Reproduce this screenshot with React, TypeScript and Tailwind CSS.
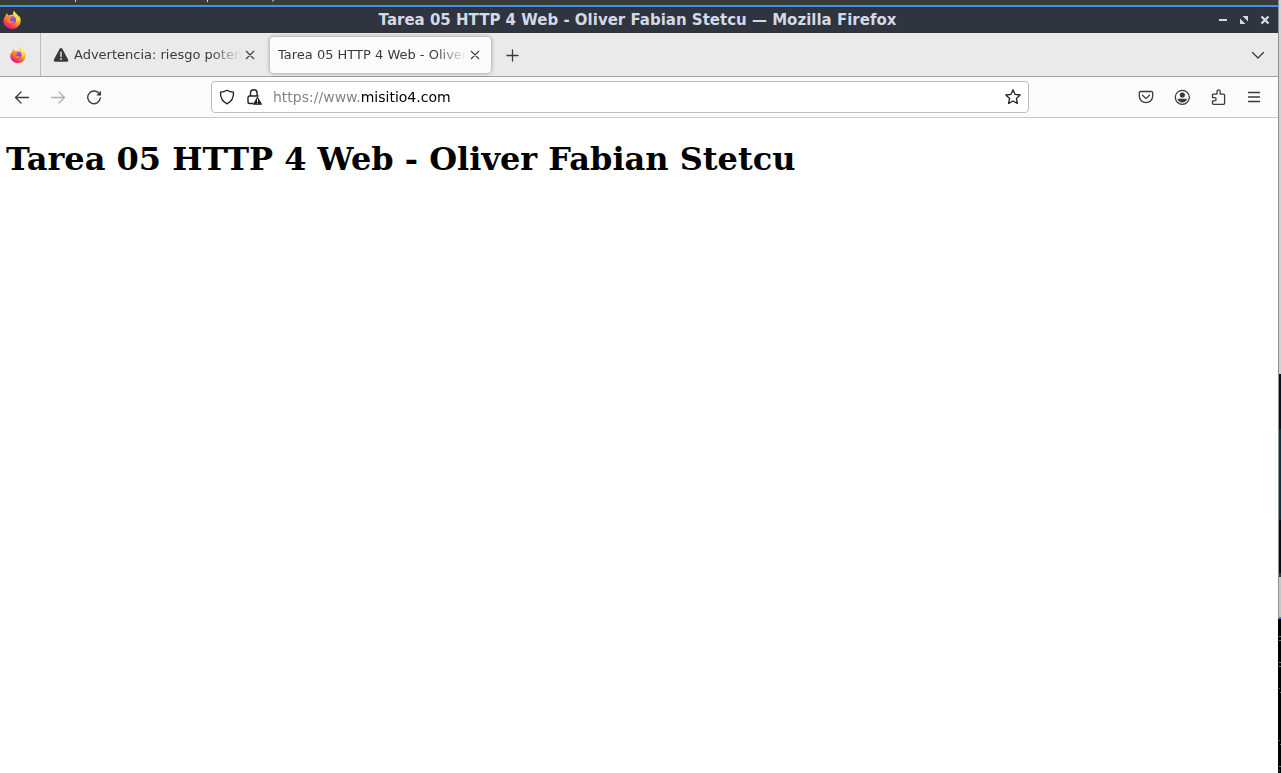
import type { ReactNode } from "react";

const TITLE = "Tarea 05 HTTP 4 Web - Oliver Fabian Stetcu";

function FirefoxLogo({ className, id }: { className: string; id: string }) {
  return (
    <svg viewBox="0 0 32 32" className={`shrink-0 ${className}`} aria-hidden="true">
      <defs>
        <linearGradient id={`${id}-flame`} x1="0.8" y1="0.05" x2="0.25" y2="0.95">
          <stop offset="0.1" stopColor="#fff44f" />
          <stop offset="0.4" stopColor="#ffb22e" />
          <stop offset="0.62" stopColor="#ff7035" />
          <stop offset="0.82" stopColor="#f8365a" />
          <stop offset="1" stopColor="#e31587" />
        </linearGradient>
        <radialGradient id={`${id}-globe`} cx="0.6" cy="0.2" r="0.8">
          <stop offset="0" stopColor="#a052f5" />
          <stop offset="1" stopColor="#5b41d4" />
        </radialGradient>
      </defs>
      <path
        d="M20 0c-2.500 2.500-2.500 5.200-1.500 7.500-3-1-5.800-1-8 .6C8.500 7.500 7.200 5.500 7.300 3.600 5.500 5.300 4.700 7.300 4.700 9 2.300 11.500.5 14.500.5 17.800.5 25.500 7.500 32 16 32s15.500-6.300 15.500-15c0-4-1.600-7.500-4-9.600.5 1.300.7 2.500.6 3.600C26.500 6 21.500 4.500 20 0Z"
        fill={`url(#${id}-flame)`}
      />
      <path d="M20 0c-2.500 3-2 7 1.500 10.500 3 3.500 3.200 7.500 1.500 11 4-2 6-6.500 5.100-10.500C26.500 6 21.500 4.500 20 0Z" fill="#ffe13d" opacity="0.85" />
      <circle cx="16.500" cy="16" r="6.500" fill={`url(#${id}-globe)`} />
      <path d="M5 9.500c3-1.200 6-.4 7.600 1.200 1.700-.3 3 .3 3.600 1.300-.2 1.400-3 1.700-3.600 3-.3 2 1.200 3.600 4 3.300 2-.2 3.300-.6 4.400.2-1.400 3-4.200 4.300-7.300 3.900C9.500 21.800 6.500 18 7 14Z" fill="#ff8a25" opacity="0.9" />
    </svg>
  );
}

function Icon({ children, className = "size-4" }: { children: ReactNode; className?: string }) {
  return (
    <svg
      viewBox="0 0 16 16"
      className={`shrink-0 ${className}`}
      fill="none"
      stroke="currentColor"
      strokeWidth="1.3"
      strokeLinecap="round"
      strokeLinejoin="round"
      aria-hidden="true"
    >
      {children}
    </svg>
  );
}

function IconButton({ label, disabled, children }: { label: string; disabled?: boolean; children: ReactNode }) {
  return (
    <button
      type="button"
      aria-label={label}
      disabled={disabled}
      className="flex size-8 items-center justify-center rounded text-[#3a3a3a] disabled:text-[#b0b0b0]"
    >
      {children}
    </button>
  );
}

function CloseTab() {
  return (
    <button type="button" aria-label="Cerrar pestaña" className="ml-[3px]">
      <Icon className="size-[10px]">
        <path d="m2 2 12 12M14 2 2 14" strokeWidth="1.700" />
      </Icon>
    </button>
  );
}

function TabTitle({ children, className }: { children: ReactNode; className: string }) {
  return (
    <div
      className={`overflow-hidden whitespace-nowrap [mask-image:linear-gradient(to_left,transparent,black_32px)] ${className}`}
    >
      {children}
    </div>
  );
}

function TitleBar() {
  return (
    <div className="flex h-[26px] items-center bg-[#2f343f] pl-[3px] pr-2 text-[#d3dae3]">
      <FirefoxLogo id="window" className="size-[18px]" />
      <div className="min-w-0 flex-1 truncate pl-9 text-center text-[15px] leading-[26px] font-bold">
        {TITLE} — Mozilla Firefox
      </div>
      <div className="flex items-center gap-[11px]">
        <button type="button" aria-label="Minimizar">
          <svg viewBox="0 0 10 10" className="size-[10px]" fill="currentColor"><path d="M1 4h8v2H1z" /></svg>
        </button>
        <button type="button" aria-label="Restaurar">
          <svg viewBox="0 0 10 10" className="size-[10px]" fill="currentColor"><path d="M3.500 1H9v5.500zM1 3.500V9h5.500z" /></svg>
        </button>
        <button type="button" aria-label="Cerrar ventana">
          <svg viewBox="0 0 10 10" className="size-[10px]" fill="none" stroke="currentColor" strokeWidth="2.400"><path d="m1.500 1.500 7 7m0-7-7 7" /></svg>
        </button>
      </div>
    </div>
  );
}

function TabStrip() {
  return (
    <div className="flex h-11 items-center border-b border-[#a0a0a0] bg-[#eaeaea] text-[13px] text-[#3a3a3a]">
      <button type="button" aria-label="Firefox View" className="flex h-full w-[41px] items-center border-r border-[#bcbcbc] pl-[10px]">
        <FirefoxLogo id="view" className="size-4" />
      </button>
      <div className="flex w-[229px] items-center pl-3">
        <svg viewBox="0 0 16 16" className="size-4 shrink-0" aria-hidden="true">
          <path d="M6.800 1.600c.5-.9 1.900-.9 2.400 0l5.900 11c.5 1-.2 2.200-1.300 2.200H2.200C1.100 14.800.4 13.600.9 12.600Z" fill="#3a3a3a" />
          <path d="M8 5.300v4.200" stroke="#eaeaea" strokeWidth="1.400" strokeLinecap="round" />
          <circle cx="8" cy="12" r=".9" fill="#eaeaea" />
        </svg>
        <TabTitle className="ml-[5px] w-[168px]">Advertencia: riesgo potencial</TabTitle>
        <CloseTab />
      </div>
      <div className="flex h-9 w-[221px] items-center rounded bg-[#fbfbfb] pl-2 shadow-[0_0_4px_rgba(0,0,0,0.4)]">
        <TabTitle className="w-[189px]">{TITLE}</TabTitle>
        <CloseTab />
      </div>
      <button type="button" aria-label="Nueva pestaña" className="ml-[13px]">
        <Icon><path d="M8.500 3v11M3 8.500h11" /></Icon>
      </button>
      <button type="button" aria-label="Listar pestañas" className="ml-auto mr-3">
        <Icon><path d="m2.500 5.500 5.500 5.500 5.500-5.500" /></Icon>
      </button>
    </div>
  );
}

function NavBar() {
  return (
    <div className="flex h-[41px] items-center justify-between border-b border-[#c8c8c8] bg-[#fbfbfb] pl-[6px] pr-2">
      <div className="flex gap-1">
        <IconButton label="Atrás">
          <Icon><path d="M14.500 8.500h-13m5.500-5.500L1.500 8.500 7 14" /></Icon>
        </IconButton>
        <IconButton label="Adelante" disabled>
          <Icon><path d="M1.500 8.500h13M9 3l5.500 5.500L9 14" /></Icon>
        </IconButton>
        <IconButton label="Recargar">
          <Icon>
            <path d="M13.500 5.200A6.300 6.300 0 1 0 14.300 9" strokeWidth="1.400" />
            <path d="M15 1.800v4.700h-4.700z" fill="currentColor" stroke="none" />
          </Icon>
        </IconButton>
      </div>
      <div className="flex h-8 w-[65%] max-w-[818px] items-center rounded border border-[#bdbdbd] bg-white px-[7px] text-[#202020]">
        <Icon>
          <path d="M8 1.200c2 1.300 4.200 1.900 6.500 2 .2 5-1.300 9-6.500 11.600C2.800 12.200 1.300 8.200 1.500 3.200c2.300-.1 4.500-.7 6.500-2Z" />
        </Icon>
        <Icon className="ml-[11px] size-4">
          <path d="M4.500 7V4a3.300 3.300 0 0 1 6.600 0v3M7 14.500H3.500A1.500 1.500 0 0 1 2 13V8.500A1.500 1.500 0 0 1 3.500 7h8.600" strokeWidth="1.400" />
          <path d="M11.500 8.500 15.300 15.200H7.700z" fill="currentColor" strokeWidth="1.200" />
          <path d="M11.500 10.300v2.200m0 1.600v.1" stroke="white" strokeWidth="1" />
        </Icon>
        <input
          type="text"
          aria-label="Dirección"
          defaultValue="https://www.misitio4.com"
          className="ml-[11px] min-w-0 flex-1 bg-[linear-gradient(to_right,#808080_87px,#000_87px)] bg-clip-text text-[14px] leading-5 text-transparent outline-none"
        />
        <button type="button" aria-label="Añadir a marcadores">
          <Icon><path d="m8 .8 2.100 4.600 5 .6-3.700 3.500 1 5L8 12l-4.400 2.500 1-5L.9 6l5-.6Z" /></Icon>
        </button>
      </div>
      <div className="flex gap-1">
        <IconButton label="Guardar en Pocket">
          <Icon>
            <path d="M2.500 2.500h11A1.200 1.200 0 0 1 14.700 3.700V7A6.700 6.700 0 0 1 1.300 7V3.700A1.200 1.200 0 0 1 2.500 2.500Z" />
            <path d="m4.500 6.200 3.500 3.400 3.500-3.400" />
          </Icon>
        </IconButton>
        <IconButton label="Cuenta">
          <Icon>
            <circle cx="8.300" cy="8.300" r="7" />
            <circle cx="8.300" cy="6" r="2.600" fill="currentColor" stroke="none" />
            <path d="M3.600 9.700h9.400c-.2 2-2.100 3.700-4.700 3.700S3.800 11.700 3.600 9.700Z" fill="currentColor" stroke="none" />
          </Icon>
        </IconButton>
        <IconButton label="Extensiones">
          <Icon>
            <path d="M3 5.200h4V2.500a1.600 1.600 0 0 1 3.200 0v2.700h3.300c.7 0 1.100.4 1.100 1.100v7.900c0 .7-.4 1.100-1.100 1.100H3.600c-.7 0-1.100-.4-1.100-1.100v-2.400h2a1.600 1.600 0 0 0 0-3.200h-2V5.700Z" />
          </Icon>
        </IconButton>
        <IconButton label="Abrir menú">
          <Icon><path d="M2.500 3.500h11M2.500 8h11M2.500 12.500h11" /></Icon>
        </IconButton>
      </div>
    </div>
  );
}

function DesktopEdge() {
  return (
    <div aria-hidden="true" className="flex w-[3px] shrink-0 flex-col border-l border-[#909090] bg-[#d2d2d2]">
      <div className="h-[374px]" />
      <div className="h-[55px] bg-[#0c1018]" />
      <div className="h-[91px] bg-[#123039]" />
      <div className="h-[53px] bg-[#080b12]" />
      <div className="h-1 bg-[#353540]" />
      <div className="h-10 bg-[#c8c8c8]" />
      <div className="h-[2px] bg-[#3974bc]" />
      <div className="-ml-px flex-1 bg-black">
        <svg viewBox="0 0 3 154" className="block h-[154px] w-[3px]" fill="none" stroke="#6e6e6e">
          <path d="M1 17.500h2M1 21.500h2M1 43.500h2M1 47.500h2M1 69.500h1M2 73.500h1M1 121.500h1M2 125.500h1M1 147.500h2M1 151.500h1" />
        </svg>
      </div>
    </div>
  );
}

export default function App() {
  return (
    <div className="flex min-h-screen bg-white font-['DejaVu_Sans',sans-serif]">
      <div className="flex min-w-0 flex-1 flex-col">
        <div className="h-[7px] border-b-2 border-[#4a90e2] bg-[#3b3b3b]">
          <svg className="block h-[3px] w-[290px]" viewBox="0 0 290 3" aria-hidden="true">
            <path d="M75.500 0v2M207.500 0v2" stroke="#e8e2b0" />
            <path d="m274 0-2 1.500" stroke="#c8dce8" />
          </svg>
        </div>
        <TitleBar />
        <TabStrip />
        <NavBar />
        <main className="flex-1 px-[6px] pt-[22px]">
          <h1 className="font-['DejaVu_Serif',serif] text-[32px] leading-[38px] font-bold text-black">{TITLE}</h1>
        </main>
      </div>
      <DesktopEdge />
    </div>
  );
}
